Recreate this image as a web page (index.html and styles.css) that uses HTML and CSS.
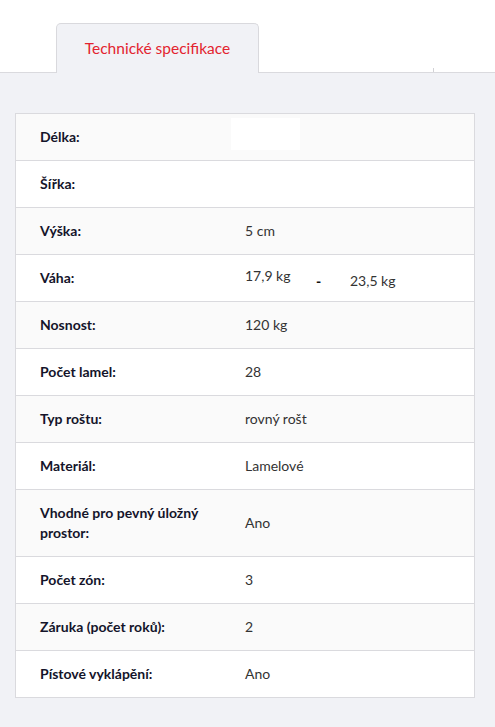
FILE: index.html
```html
<!DOCTYPE html>
<html lang="cs">
<head>
<meta charset="utf-8">
<link rel="stylesheet" href="styles.css">
</head>
<body>
<div class="tabs">
  <div class="tab active">Technické specifikace</div>
  <div class="tab-tick"></div>
</div>
<div class="panel">
  <div class="spec">
    <div class="row"><div class="label">Délka:</div><div class="value"><div class="blank"></div></div></div>
    <div class="row"><div class="label">Šířka:</div><div class="value"></div></div>
    <div class="row"><div class="label">Výška:</div><div class="value">5 cm</div></div>
    <div class="row"><div class="label">Váha:</div><div class="value range"><span class="from">17,9 kg</span><span class="dash">-</span><span class="to">23,5 kg</span></div></div>
    <div class="row"><div class="label">Nosnost:</div><div class="value">120 kg</div></div>
    <div class="row"><div class="label">Počet lamel:</div><div class="value">28</div></div>
    <div class="row"><div class="label">Typ roštu:</div><div class="value">rovný rošt</div></div>
    <div class="row"><div class="label">Materiál:</div><div class="value">Lamelové</div></div>
    <div class="row"><div class="label">Vhodné pro pevný úložný prostor:</div><div class="value">Ano</div></div>
    <div class="row"><div class="label">Počet zón:</div><div class="value">3</div></div>
    <div class="row"><div class="label">Záruka (počet roků):</div><div class="value">2</div></div>
    <div class="row"><div class="label">Pístové vyklápění:</div><div class="value">Ano</div></div>
  </div>
</div>
</body>
</html>
```

FILE: styles.css
```css
* { box-sizing: border-box; }
html, body { margin: 0; padding: 0; }
body {
  background: #ffffff;
  font-family: Lato, "Open Sans", "Liberation Sans", sans-serif;
  font-size: 14px;
  color: #333;
  width: 495px;
  height: 727px;
  overflow: hidden;
}
.tabs {
  display: flex;
  align-items: flex-end;
  height: 73px;
  padding-left: 56px;
  border-bottom: 1px solid #dadade;
}
.tab {
  width: 203px;
  height: 50px;
  margin-bottom: -1px;
  display: flex;
  align-items: center;
  justify-content: center;
  font-size: 15.5px;
  color: #e3242f;
  background: #f1f2f6;
  border: 1px solid #d9d9dd;
  border-bottom: none;
  border-radius: 5px 5px 0 0;
  padding-bottom: 2px;
}
.tab-tick {
  margin-left: 174px;
  width: 1px;
  height: 4px;
  background: #d2d2d6;
}
.panel {
  background: #f1f2f6;
  height: 654px;
  padding: 40px 0 0 15px;
}
.spec {
  width: 460px;
  border: 1px solid #dadade;
  border-bottom: none;
  background: #fff;
}
.row {
  display: grid;
  grid-template-columns: 205px 1fr;
  align-items: center;
  min-height: 47px;
  padding: 13px 0 13px 24px;
  border-bottom: 1px solid #dadade;
  line-height: 20px;
}
.row:nth-child(odd) { background: #fafafa; }
.label {
  font-weight: 700;
  color: #14142a;
  padding-right: 10px;
}
.value { color: #333; }
.blank {
  width: 69px;
  height: 32px;
  margin: -9px 0 -3px -14px;
  background: #fff;
}
.range { display: flex; align-items: center; height: 20px; }
.from { width: 71px; margin: -2px 0 2px; }
.dash { width: 34px; font-weight: 900; color: #111; margin: 3px 0 -3px; }
.to { margin: 3px 0 -3px; }
```
